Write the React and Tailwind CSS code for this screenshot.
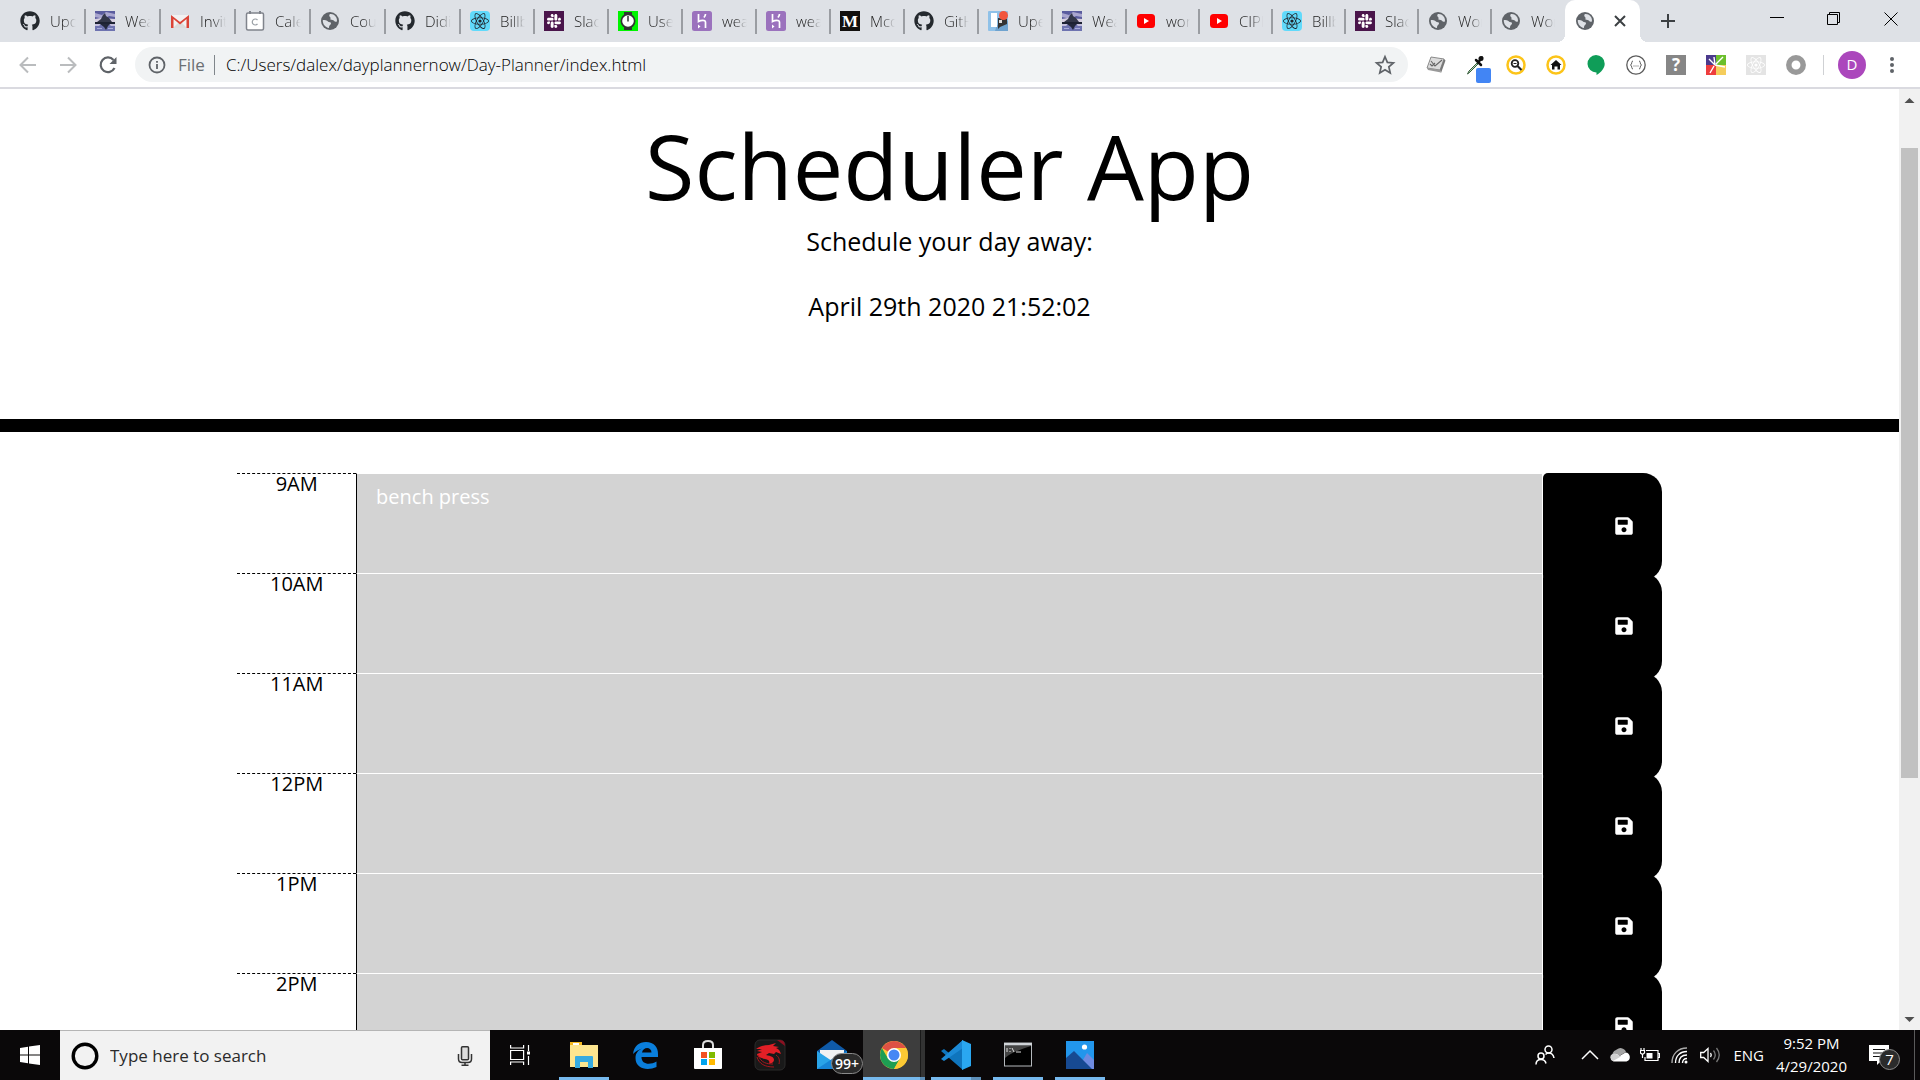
import React from "react";
import { FaSave, FaGithub, FaReact, FaSlack } from "react-icons/fa";

const svg = "block h-5 w-5 shrink-0";

function Github() {
  return <FaGithub className="block h-5 w-5 shrink-0 text-[#24292e]" />;
}
function Scene() {
  return (
    <svg className={svg} viewBox="0 0 20 20">
      <rect width="20" height="20" fill="#5a5c9e" />
      <path d="M0 2l7 2 4-3 9 2v3l-6-1-5 3-9-2z" fill="#a9a6cf" />
      <path d="M0 8l6-1 14 1v4H0z" fill="#d6cfe0" />
      <path d="M2 11l4-3 2-4 2-2 1 3 3 2 3 4z" fill="#33374a" />
      <rect y="11" width="20" height="2" fill="#1d2233" />
      <path d="M0 13h20v7H0z" fill="#6e73b0" />
      <path d="M0 13h6l-2 2H0zM14 13h6v2h-4z" fill="#c3bfdd" />
      <path d="M5 13h10l-2 2-2 4-2-3z" fill="#23283c" />
      <path d="M2 17h5v1H2zM13 17h5v1h-5z" fill="#a9addb" />
    </svg>
  );
}
function Gmail() {
  return (
    <svg className={svg} viewBox="0 0 20 20">
      <path d="M1 4h18v13H1z" fill="#f2f2f2" />
      <path d="M3 17L10 10l7 7z" fill="#dcdcdc" />
      <path d="M1 17V4l9 7 9-7v13h-2.500V8L10 13.500 3.500 8v9z" fill="#db4437" />
    </svg>
  );
}
function CalendarIcon() {
  return (
    <svg className={svg} viewBox="0 0 20 20" fill="none">
      <rect x="1.500" y="2" width="17" height="17" rx="1.500" fill="#fff" stroke="#80848c" strokeWidth="1.500" />
      <path d="M5 0v3M15 0v3" stroke="#80848c" strokeWidth="2" />
      <path d="M12.500 9a3 3 0 1 0 0 4" stroke="#9aa0a6" strokeWidth="1.200" />
    </svg>
  );
}
function Globe() {
  return (
    <svg className={svg} viewBox="0 0 20 20">
      <circle cx="10" cy="10" r="9" fill="#5f6368" />
      <path d="M2.800 9c2 0 4.200 0 5.200 1.500.5 1 3 .2 3 1.700 0 1.800-2 1.300-2 4.800-3.800-.5-6.500-4-6.200-8zM10 3c2.500-.3 5 1 6.200 3.200.8 1.600.9 3 .7 4.300-1.500.5-2.200.2-2.900-.8s-2.200-.2-3.200-.9c-1-.8.4-1.700-.6-2.500S8.800 4 10 3z" fill="#dee1e6" />
    </svg>
  );
}
function ReactTab() {
  return (
    <span className="flex h-5 w-5 shrink-0 items-center justify-center rounded-sm bg-[#61dafb]">
      <FaReact className="h-[18px] w-[18px] text-[#20232a]" />
    </span>
  );
}
function SlackTab() {
  return (
    <span className="flex h-5 w-5 shrink-0 items-center justify-center bg-[#4a154b]">
      <FaSlack className="h-4 w-4 text-white" />
    </span>
  );
}
function Timer() {
  return (
    <svg className={svg} viewBox="0 0 20 20">
      <rect width="20" height="20" fill="#00f400" />
      <path d="M6 1h8v3H6zM6 16h8v3H6z" fill="#333" />
      <circle cx="10" cy="10" r="7.500" fill="#333" />
      <circle cx="10" cy="10" r="5.800" fill="#fff" />
      <path d="M10 5v5.500" stroke="#333" strokeWidth="1.500" />
    </svg>
  );
}
function Heroku() {
  return (
    <svg className={svg} viewBox="0 0 20 20" fill="none" stroke="#fff" strokeWidth="1.700">
      <rect width="20" height="20" rx="2.500" fill="#9b72bd" stroke="none" />
      <path d="M6.500 3v7.500c2-1 7-2.200 7 .8V17M13.500 3c0 1.500-.6 2.500-1.600 3.500" />
      <path d="M6 13.500l2.500 2L6 17.500z" fill="#fff" stroke="none" />
    </svg>
  );
}
function Medium() {
  return (
    <span className="flex h-5 w-5 shrink-0 items-center justify-center bg-[#12100e] font-['Liberation_Serif',serif] text-[17px] leading-none font-bold text-white">
      M
    </span>
  );
}
function Trello() {
  return (
    <svg className={svg} viewBox="0 0 20 20">
      <rect width="20" height="20" rx="1" fill="#8fc1e8" />
      <path d="M9 14l11-4v10H7z" fill="#6fa3cf" />
      <rect x="3" y="2" width="6" height="14" fill="#fff" />
      <path d="M10 7l9 1v5l-7 3-2 2z" fill="#333" />
      <path d="M11 9h3v3h-3z" fill="#ddd" />
      <circle cx="15.500" cy="4.500" r="4.500" fill="#f2553d" />
    </svg>
  );
}
function Youtube() {
  return (
    <svg className={svg} viewBox="0 0 20 20">
      <rect x="1" y="3" width="18" height="14" rx="3.500" fill="#f00" />
      <path d="M8 7l5 3-5 3z" fill="#fff" />
    </svg>
  );
}

const tabs = [
  [Github, "Upda"], [Scene, "Weat"], [Gmail, "Invita"], [CalendarIcon, "Calen"], [Globe, "Cour"],
  [Github, "Didi C"], [ReactTab, "Billbo"], [SlackTab, "Slack"], [Timer, "User"], [Heroku, "weat"],
  [Heroku, "weat"], [Medium, "Mcdo"], [Github, "GitHu"], [Trello, "Uper"], [Scene, "Weat"],
  [Youtube, "work"], [Youtube, "CIPH"], [ReactTab, "Billbo"], [SlackTab, "Slack"], [Globe, "Work"],
  [Globe, "Work"],
];

function tabWidth(i) {
  if (i < 6) return "w-[75px]";
  return i < 15 ? "w-[74px]" : "w-[73px]";
}

function TabStrip() {
  return (
    <div className="flex h-[42px] items-end bg-[#dee1e6] pl-[11px]">
      {tabs.map(([Icon, label], i) => (
        <button key={i} type="button" className={"flex h-[42px] min-w-0 items-center " + tabWidth(i)}>
          <span className={"flex h-[25px] flex-1 items-center gap-[10px] overflow-hidden border-r-2 pr-2 pl-[9px] " + (i === 20 ? "border-transparent" : "border-[#9a9da2]")}>
            <Icon />
            <span className="min-w-0 flex-1 overflow-hidden text-left text-[15px] leading-5 font-light whitespace-nowrap text-[#222] [mask-image:linear-gradient(to_right,#000_50%,transparent)]">
              {label}
            </span>
          </span>
        </button>
      ))}
      <div className="relative flex h-[42px] w-[75px] shrink-0 items-center justify-between rounded-t-[10px] bg-white pr-3 pl-[10px]">
        <span className="absolute bottom-0 -left-2 h-2 w-2 bg-[radial-gradient(circle_at_0_0,#dee1e6_8px,#fff_8px)]" />
        <span className="absolute -right-2 bottom-0 h-2 w-2 bg-[radial-gradient(circle_at_100%_0,#dee1e6_8px,#fff_8px)]" />
        <Globe />
        <button type="button" aria-label="Close tab">
          <svg className="block h-4 w-4" viewBox="0 0 16 16" stroke="#3c4043" strokeWidth="2">
            <path d="M3 3l10 10M13 3L3 13" />
          </svg>
        </button>
      </div>
      <button type="button" aria-label="New tab" className="ml-5 flex h-[42px] items-center">
        <svg className="block h-4 w-4" viewBox="0 0 16 16" stroke="#3c4043" strokeWidth="2">
          <path d="M8 1v14M1 8h14" />
        </svg>
      </button>
      <div className="ml-auto flex h-[42px] items-start gap-[43px] pt-3 pr-[22px]">
        <button type="button" aria-label="Minimize">
          <svg className="block h-[14px] w-[14px]" viewBox="0 0 14 14" stroke="#000"><path d="M0 5.500h14" /></svg>
        </button>
        <button type="button" aria-label="Restore">
          <svg className="block h-[14px] w-[14px]" viewBox="0 0 14 14" fill="none" stroke="#000">
            <path d="M.5 2.500h10v10H.5zM2.500 2.500V.5h10v10H11" />
          </svg>
        </button>
        <button type="button" aria-label="Close">
          <svg className="block h-[14px] w-[14px]" viewBox="0 0 14 14" stroke="#000"><path d="M.5.5l13 13M13.500.5l-13 13" /></svg>
        </button>
      </div>
    </div>
  );
}

function Toolbar() {
  return (
    <div className="flex h-[47px] items-center border-b-2 border-[#dadae0] bg-white pr-[18px] pl-[18px]">
      <div className="flex items-center gap-5 pr-[17px]">
        <button type="button" aria-label="Back">
          <svg className={svg} viewBox="0 0 20 20" fill="none" stroke="#babcbe" strokeWidth="2"><path d="M18 10H3M10 2.500L2.500 10l7.500 7.500" /></svg>
        </button>
        <button type="button" aria-label="Forward">
          <svg className={svg} viewBox="0 0 20 20" fill="none" stroke="#babcbe" strokeWidth="2"><path d="M2 10h15M10 2.500l7.500 7.500-7.500 7.500" /></svg>
        </button>
        <button type="button" aria-label="Reload">
          <svg className={svg} viewBox="0 0 20 20" fill="none" stroke="#5f6368" strokeWidth="2.200"><path d="M16.500 13A7.300 7.300 0 1 1 15.500 5" /><path d="M18.500 2v7h-7z" fill="#5f6368" stroke="none" /></svg>
        </button>
      </div>
      <div className="flex h-[35px] min-w-0 flex-1 items-center rounded-full bg-[#f1f3f4] pr-3 pl-3 text-[17px] leading-6">
        <svg className={svg} viewBox="0 0 20 20" fill="none" stroke="#5f6368" strokeWidth="1.800">
          <circle cx="10" cy="10" r="7.500" /><path d="M10 9v5M10 6v1.800" />
        </svg>
        <span className="ml-[11px] text-[#6b6f73]">File</span>
        <span className="mr-[11px] ml-[9px] h-5 w-px bg-[#80868b]" />
        <input
          aria-label="Address"
          defaultValue="C:/Users/dalex/dayplannernow/Day-Planner/index.html"
          className="min-w-0 flex-1 bg-transparent font-light text-black outline-none"
        />
        <button type="button" aria-label="Bookmark">
          <svg className="block h-[22px] w-[22px]" viewBox="0 0 24 24" fill="none" stroke="#5f6368" strokeWidth="1.900"><path d="M12 3l2.600 6.100 6.600.6-5 4.400 1.500 6.500L12 17.200l-5.700 3.400 1.500-6.500-5-4.400 6.600-.6z" /></svg>
        </button>
      </div>
      <div className="flex items-center gap-5 pl-[18px]">
        <svg className={svg} viewBox="0 0 20 20"><path d="M5 2l13 2-4 11-13-2z" fill="#dcdcdc" stroke="#8a8a8a" /><path d="M14 15l4-11 1.500 1.500L15 18z" fill="#777" /><path d="M1 13l13 2 1 2.500L2 15z" fill="#999" /><path d="M5 6l4 5 7-6M4 9l2 2 3-3" fill="none" stroke="#666" strokeWidth="1.100" /></svg>
        <svg className="block h-5 w-5 shrink-0 overflow-visible" viewBox="0 0 20 20"><path d="M11 8L3 16l-1.500 3L4 17l8-8z" fill="#b9d8b9" stroke="#355c3a" /><path d="M10 5l5 5M12.500 7l3.500-4.500" stroke="#111" strokeWidth="2.500" strokeLinecap="round" /><circle cx="15" cy="3.500" r="2.500" fill="#111" /><rect x="10" y="13" width="15" height="15" rx="2" fill="#4285f4" /></svg>
        <svg className={svg} viewBox="0 0 20 20" fill="none"><circle cx="10" cy="10" r="8.500" fill="#fff" stroke="#fcc419" strokeWidth="2.500" /><circle cx="9" cy="8.500" r="3.300" stroke="#222" strokeWidth="1.800" /><path d="M11.500 11l4 4" stroke="#222" strokeWidth="2.200" /><path d="M7.500 8.500h3" stroke="#222" /></svg>
        <svg className={svg} viewBox="0 0 20 20"><circle cx="10" cy="10" r="8.500" fill="#fff" stroke="#fcc419" strokeWidth="2.500" /><path d="M10 5l5.500 5H14v4.500h-2.500v-3h-3v3H6V10H4.500z" fill="#111" /></svg>
        <svg className={svg} viewBox="0 0 20 20"><path d="M10 0a8.700 8.700 0 0 1 8.700 8.700c0 4.500-3.500 8.500-8.200 11.300v-2.500A8.700 8.700 0 0 1 10 0z" fill="#0f9d58" /></svg>
        <svg className={svg} viewBox="0 0 20 20" fill="none" stroke="#5b5b5b"><circle cx="10" cy="10" r="9.200" strokeWidth="1.300" /><path d="M7 6c-2 0-.5 3-2.500 4 2 1 .5 4 2.500 4M13 6c2 0 .5 3 2.500 4-2 1-.5 4-2.500 4" /><path d="M7.500 11h5" strokeDasharray="1 1" /></svg>
        <span className="flex h-5 w-5 shrink-0 items-center justify-center bg-[#868686] text-[17px] leading-none font-bold text-white">?</span>
        <svg className={svg} viewBox="0 0 20 20"><path d="M0 0h10v10H0z" fill="#4b3a8c" /><path d="M10 0h10v10H10z" fill="#6cbf2c" /><path d="M0 10h10v10H0z" fill="#ee3d3d" /><path d="M10 10h10v10H10z" fill="#f5cd5c" /><path d="M9 10L3 4M9 10L8 2M10 9l7-7M9 10l10 2M8 11l-4 7" stroke="#fff" strokeWidth="1.400" /></svg>
        <span className="flex h-5 w-5 shrink-0 items-center justify-center bg-[#e4e4e4]"><FaReact className="h-[18px] w-[18px] text-white" /></span>
        <svg className={svg} viewBox="0 0 20 20"><circle cx="10" cy="10" r="7.200" fill="none" stroke="#999" strokeWidth="5.500" /></svg>
      </div>
      <span className="ml-[17px] h-5 w-px bg-[#cfd1d4]" />
      <button type="button" aria-label="Profile" className="ml-[14px] flex h-7 w-7 items-center justify-center rounded-full bg-[#ab47bc] text-[15px] leading-none text-white">D</button>
      <button type="button" aria-label="Menu" className="ml-4">
        <svg className={svg} viewBox="0 0 20 20" fill="#5f6368"><circle cx="10" cy="4" r="2" /><circle cx="10" cy="10" r="2" /><circle cx="10" cy="16" r="2" /></svg>
      </button>
    </div>
  );
}

const hours = ["9AM", "10AM", "11AM", "12PM", "1PM", "2PM"];

function Planner() {
  return (
    <main className="min-w-0 flex-1 overflow-hidden bg-white text-black">
      <header className="h-[343px] border-b-[13px] border-black pt-[15px] text-center">
        <h1 className="text-[90px] leading-[122px]">Scheduler App</h1>
        <p className="mb-[35px] text-[25px] leading-[30px]">Schedule your day away:</p>
        <p className="text-[25px] leading-[30px]">April 29th 2020 21:52:02</p>
      </header>
      <div className="mx-auto mt-[41px] w-3/4">
        {hours.map((hour, i) => (
          <div key={hour} className="flex h-[100px]">
            <label htmlFor={hour} className="w-1/12 border-t border-dashed border-black text-center text-xl leading-5">
              {hour}
            </label>
            <textarea
              id={hour}
              defaultValue={i === 0 ? "bench press" : ""}
              className="w-10/12 resize-none border-t border-r border-l border-t-white border-r-white border-l-black bg-[#d3d3d3] px-[19px] py-2 text-xl leading-[30px] text-white outline-none"
            />
            <button
              type="button"
              aria-label={"Save " + hour}
              className="flex h-[107px] w-1/12 items-center justify-end rounded-l-[5px] rounded-r-[19px] bg-black pr-7 pb-px text-white"
            >
              <FaSave className="h-5 w-5" />
            </button>
          </div>
        ))}
      </div>
    </main>
  );
}

function Scrollbar() {
  return (
    <div className="flex w-[21px] shrink-0 flex-col items-center bg-[#f1f1f1]" aria-hidden="true">
      <svg className="block h-[21px] w-[21px] shrink-0" viewBox="0 0 21 21"><path d="M10.500 9l5 5h-10z" fill="#505050" /></svg>
      <div className="mt-[38px] h-[630px] w-[17px] bg-[#c1c1c1]" />
      <svg className="mt-auto block h-[21px] w-[21px] shrink-0" viewBox="0 0 21 21"><path d="M5.500 8h10l-5 5z" fill="#505050" /></svg>
    </div>
  );
}

const apps = [
  ["File Explorer", "line", <svg className="h-7 w-7" viewBox="0 0 28 28"><path d="M0 1h12v4H0z" fill="#f5b921" /><path d="M0 4h28v22H0z" fill="#fde58f" /><path d="M3 2h6v2H3z" fill="#fff" /><path d="M5 27V16q0-1 1-1h16q1 0 1 1v11h-5v-6h-8v6z" fill="#37abe1" /></svg>],
  ["Edge", "", <svg className="h-7 w-7" viewBox="0 0 28 28"><path d="M1 13C2 5 7 1 14 1c8 0 12 5 12 12v3H9.500c0 8 9 8 15 4.500V26c-9 4-21 2-21-9 0-5 3-8 6.500-9.500C7 9 4 9.500 1 13zm9-1.500h9.500c0-6-8.500-6-9.500 0z" fill="#0a7edb" /></svg>],
  ["Store", "", <svg className="h-8 w-8" viewBox="0 0 32 32"><path d="M11 9V6q0-4 5-4t5 4v3" fill="none" stroke="#ddd" strokeWidth="2" /><path d="M2 9h28v20q0 1-1 1H3q-1 0-1-1z" fill="#fff" /><path d="M9 13h6v6H9z" fill="#f25022" /><path d="M17 13h6v6h-6z" fill="#7fba00" /><path d="M9 20h6v6H9z" fill="#00a4ef" /><path d="M17 20h6v6h-6z" fill="#ffb900" /></svg>],
  ["Dragon Center", "", <svg className="h-8 w-8" viewBox="0 0 32 32"><rect x="1" y="1" width="30" height="30" rx="5" fill="#191919" stroke="#2b2b2b" /><path d="M23 1h3q5 0 5 6z" fill="#8b1020" /><path d="M2 10c4-3 8-4 13-4l7-2-3 3 6 1-3 1c3 1 4 3 5 6l-5-2-2 2-5-1-3 2c5 1 8 2 8 5 0 2-2 3-5 4 1-3 0-4-4-5-5-1-8-3-8-5l5-2-5-1 5-2z" fill="#e21f26" /><path d="M3 18c2 7 8 10 17 10M4 16c3 8 9 9 15 9M22 16c3 2 4 5 3 9" fill="none" stroke="#a3171d" /></svg>],
  ["Mail", "", <svg className="h-8 w-8" viewBox="0 0 32 32"><path d="M1 12L16 1l15 11v4H1z" fill="#0f5aa8" /><path d="M4 11h24v10H4z" fill="#f2f2f2" /><path d="M1 12l15 10 15-10v18H1z" fill="#2aa4e8" /><path d="M1 30l15-10 15-8v18z" fill="#1785d6" /></svg>],
  ["Chrome", "active", <svg className="h-7 w-7" viewBox="0 0 28 28"><circle cx="14" cy="14" r="14" fill="#fcc934" /><path d="M14 14L1.900 7A14 14 0 0 1 26.100 7z" fill="#dd5144" /><path d="M14 14L8 17.500 1.900 7A14 14 0 0 0 14 28l6-10.500z" fill="#1e9e53" /><path d="M14 7h12.100A14 14 0 0 1 14 28l6-10.500z" fill="#fcc934" /><circle cx="14" cy="14" r="7" fill="#fff" /><circle cx="14" cy="14" r="5.500" fill="#4587f4" /></svg>],
  ["Visual Studio Code", "split", <svg className="h-8 w-8" viewBox="0 0 32 32"><path d="M23 1l-14 13L4 10l-3 2 22 19z" fill="#0f75bd" /><path d="M23 9L10 18l-6 4-3-2L23 1z" fill="#1c8ad6" /><path d="M22 1l9 4v22l-9 4z" fill="#2aa7f0" /></svg>],
  ["Command Prompt", "line", <svg className="h-7 w-7" viewBox="0 0 28 28"><rect x=".5" y="2" width="27" height="23" fill="#000" stroke="#b5b9bd" /><path d="M0 2h28v2.500H0z" fill="#cfd3d7" /><path d="M1 5h26C18 8 8 11 1 17z" fill="#444" /><path d="M3 7v4M6 7v1M6 10v1M8 7l2 4M12 11h5" stroke="#ddd" /></svg>],
  ["Photos", "line", <svg className="h-7 w-7" viewBox="0 0 28 28"><path d="M0 0h28v28H0z" fill="#2296ec" /><path d="M14 24l7-12 7 7v9H14z" fill="#6f8be0" /><path d="M0 17l8-7 18 18H0z" fill="#174a92" /><circle cx="18.500" cy="6" r="2.600" fill="#fff" /></svg>],
];

function Taskbar() {
  return (
    <footer className="flex h-[50px] shrink-0 items-stretch bg-[#0a0809] text-white">
      <button type="button" aria-label="Start" className="flex w-[60px] items-center justify-center">
        <svg className="h-5 w-5" viewBox="0 0 20 20" fill="#fff"><path d="M0 3l8-1.200V9.500H0zM9 1.600L20 0v9.500H9zM0 10.500h8v7.700L0 17zM9 10.500h11V20L9 18.400z" /></svg>
      </button>
      <div className="flex w-[430px] items-center border-t border-[#b5b5b5] bg-[#f2f2f2] pr-[17px] pl-[11px]">
        <svg className="h-7 w-7 shrink-0" viewBox="0 0 28 28"><circle cx="14" cy="14" r="11.800" fill="none" stroke="#000" strokeWidth="3.400" /></svg>
        <input aria-label="Search" placeholder="Type here to search" className="ml-[11px] min-w-0 flex-1 bg-transparent text-[17px] leading-6 outline-none placeholder:text-[#2b2b2b]" />
        <svg className="h-5 w-4 shrink-0" viewBox="0 0 16 20" fill="none" stroke="#333" strokeWidth="1.500"><rect x="4.500" y=".8" width="7" height="13" rx="1" fill="#ddd" /><path d="M1.500 8v5q0 3.500 3.500 3.500h6q3.500 0 3.500-3.500V8M8 16.500V19M4.500 19.200h7" /></svg>
      </div>
      <button type="button" aria-label="Task view" className="mr-[3px] flex w-[60px] items-center justify-center">
        <svg className="h-5 w-5" viewBox="0 0 20 20" fill="none" stroke="#fff" strokeWidth="1.200"><path d="M.6 0v3h13V0M.6 20v-3h13v3M.6 5.500h13v9H.6zM18.500 0v6M18.500 11v9" /><path d="M17 6.500h3v3h-3z" fill="#fff" stroke="none" /></svg>
      </button>
      {apps.map(([name, state, icon]) => (
        <button
          key={name}
          type="button"
          aria-label={name}
          className={"relative flex w-[62px] items-center justify-center " + (state === "active" ? "bg-[#3d3d3d]" : "")}
        >
          {icon}
          {name === "Mail" && (
            <span className="absolute right-0 bottom-[6px] flex h-[21px] items-center rounded-full border border-[#8a8a8a] bg-[#2b2b2b] px-[3px] text-sm leading-none font-semibold">99+</span>
          )}
          {state === "active" && <span className="absolute inset-y-0 right-0 w-[5px] border-l border-[#1a1a1a] bg-[#333]" />}
          {state === "line" && <span className="absolute inset-x-[6px] bottom-0 h-[3px] bg-[#76b9ed]" />}
          {state === "active" && <span className="absolute inset-x-0 bottom-0 h-[3px] border-r-[5px] border-[#5d8fb8] bg-[#76b9ed]" />}
          {state === "split" && <span className="absolute inset-x-[6px] bottom-0 h-[3px] border-r-[10px] border-[#5d8fb8] bg-[#76b9ed]" />}
        </button>
      ))}
      <div className="ml-auto flex items-center">
        <svg className="h-5 w-5" viewBox="0 0 20 20" fill="none" stroke="#fff" strokeWidth="1.500"><circle cx="13.500" cy="4.500" r="3.500" /><circle cx="6" cy="11" r="3" /><path d="M1 19.500c0-3.500 2-5 5-5s4.500 1.500 5 4M10.500 9.500c1-1 2-1.500 3-1.500 3 0 5 2 5.500 5" /></svg>
        <div className="ml-[25px] flex items-center gap-[10px]">
          <svg className="h-5 w-5" viewBox="0 0 20 20" fill="none" stroke="#fff" strokeWidth="1.500"><path d="M2 14l8-8 8 8" /></svg>
          <svg className="h-5 w-5" viewBox="0 0 20 20"><path d="M3 12a5 5 0 0 1 3-7 6 6 0 0 1 10 2l-7 4z" fill="#a5a5a5" /><path d="M3.500 16.500a4 4 0 0 1 0-7.500q3-1 6 2l6-3.500a4.600 4.600 0 0 1 1 9z" fill="#fff" /><path d="M1 10q3-2 6-.5l4 2L3 16q-4-2-2-6z" fill="#d0d0d0" /></svg>
          <svg className="h-5 w-5" viewBox="0 0 20 20" fill="none" stroke="#fff" strokeWidth="1.200"><path d="M6 5.500h12v10H5V12M18.500 8.500h1v4h-1" /><path d="M6.500 8h6v5.500h-6z" fill="#fff" stroke="none" /><path d="M1 3v2M4 3v2M.5 5.500h4V8L2.500 9.500.5 8zM2.500 9.500V13" /></svg>
          <svg className="h-5 w-5" viewBox="0 0 20 20" fill="none" strokeWidth="1.400"><path d="M2 18C2 9 8 3 17 3" stroke="#aaa" /><path d="M5.500 18C5.500 11 10 6.500 17 6.500M9 18c0-5 3-8 8-8M12.500 18c0-3 1.500-4.500 4.500-4.500" stroke="#fff" /><circle cx="16" cy="17" r="1.500" fill="#fff" /></svg>
          <svg className="h-5 w-5" viewBox="0 0 20 20" fill="none" strokeWidth="1.300" stroke="#fff"><path d="M.7 7.500h3L8 3.500v13l-4.300-4h-3z" /><path d="M10.500 8q1.500 2 0 4" /><path d="M13.500 5.500q3.500 4.500 0 9M16.500 3q5.500 7 0 14" stroke="#777" /></svg>
        </div>
        <span className="ml-[13px] text-[15px] leading-5">ENG</span>
        <div className="ml-3 text-center text-[15px] leading-[23px]">
          <div>9:52 PM</div>
          <div>4/29/2020</div>
        </div>
        <button type="button" aria-label="Notifications" className="relative ml-[22px] h-[30px] w-[31px]">
          <svg className="block h-5 w-5" viewBox="0 0 20 20"><path d="M0 0h20v16h-8l-4 4v-4H0z" fill="#fff" /><path d="M4 4.500h12M4 8h12M4 11.500h8" stroke="#111" strokeWidth="1.200" /></svg>
          <span className="absolute right-0 bottom-0 flex h-[21px] w-[21px] items-center justify-center rounded-full border border-[#8a8a8a] bg-[#2b2b2b] text-[15px] leading-none">7</span>
        </button>
        <span className="mr-[5px] ml-[14px] h-[50px] w-px bg-[#5a5a5a]" />
      </div>
    </footer>
  );
}

export default function App() {
  return (
    <div className="flex h-screen flex-col overflow-hidden bg-white font-['Open_Sans',sans-serif]">
      <TabStrip />
      <Toolbar />
      <div className="flex min-h-0 flex-1">
        <Planner />
        <Scrollbar />
      </div>
      <Taskbar />
    </div>
  );
}
